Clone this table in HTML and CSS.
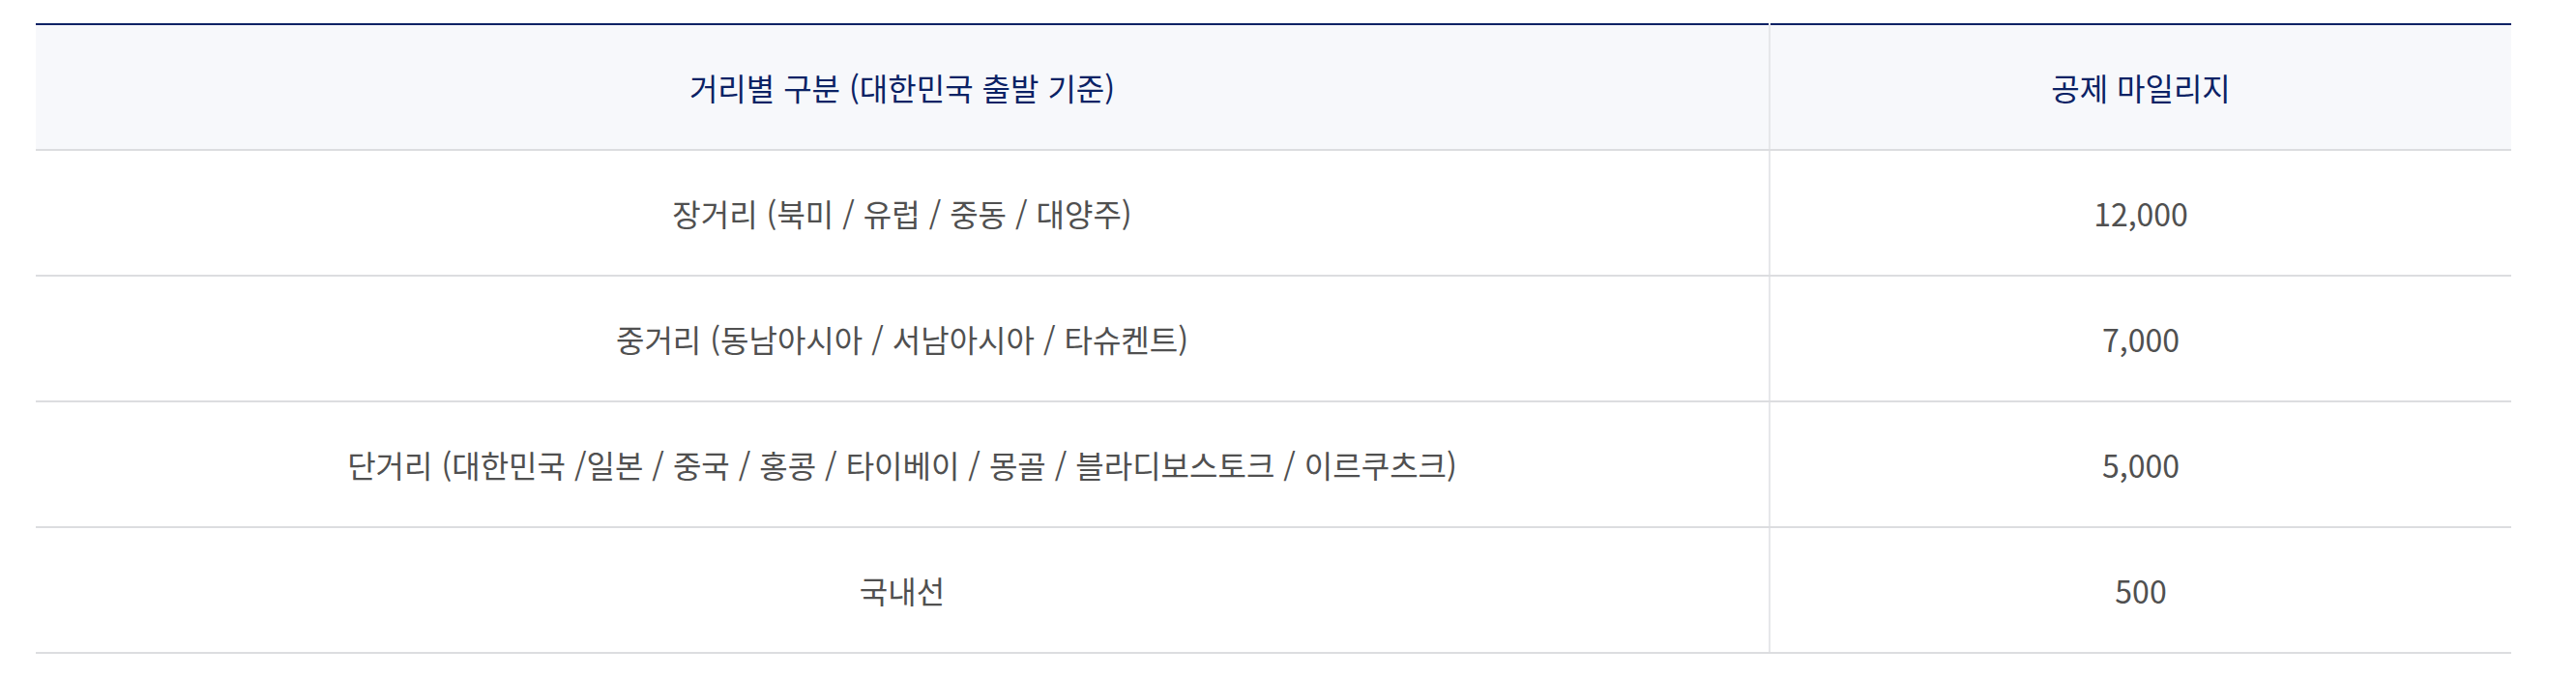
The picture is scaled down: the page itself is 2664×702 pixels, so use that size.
FILE: index.html
```html
<!DOCTYPE html>
<html lang="ko">
<head>
<meta charset="utf-8">
<title>공제 마일리지</title>
<link rel="stylesheet" href="styles.css">
</head>
<body>
<div class="wrap">
  <table class="mile-table">
    <colgroup>
      <col class="col-a">
      <col class="col-b">
    </colgroup>
    <thead>
      <tr>
        <th>거리별 구분 (대한민국 출발 기준)</th>
        <th>공제 마일리지</th>
      </tr>
    </thead>
    <tbody>
      <tr>
        <td>장거리 (북미 / 유럽 / 중동 / 대양주)</td>
        <td>12,000</td>
      </tr>
      <tr>
        <td>중거리 (동남아시아 / 서남아시아 / 타슈켄트)</td>
        <td>7,000</td>
      </tr>
      <tr>
        <td>단거리 (대한민국 /일본 / 중국 / 홍콩 / 타이베이 / 몽골 / 블라디보스토크 / 이르쿠츠크)</td>
        <td>5,000</td>
      </tr>
      <tr>
        <td>국내선</td>
        <td>500</td>
      </tr>
    </tbody>
  </table>
</div>
</body>
</html>
```
FILE: styles.css
```css
html, body {
  margin: 0;
  padding: 0;
  background: #ffffff;
}
.wrap {
  padding: 24px 0 0 37px;
}
.mile-table {
  width: 2560px;
  border-collapse: collapse;
  table-layout: fixed;
  border-top: 2px solid #0b2265;
  font-family: "Noto Sans CJK KR", "Noto Sans", sans-serif;
  font-size: 32px;
  line-height: 44px;
}
.col-a { width: 1793px; }
.col-b { width: 767px; }
.mile-table th,
.mile-table td {
  height: 130px;
  padding: 0 20px;
  text-align: center;
  vertical-align: middle;
  border-bottom: 2px solid #dcdde0;
  box-sizing: border-box;
}
.mile-table th:first-child,
.mile-table td:first-child {
  border-right: 2px solid #e6e7ea;
}
.mile-table th {
  background: #f7f8fb;
  color: #0b2265;
  font-weight: 400;
}
.mile-table td {
  color: #505050;
  font-weight: 400;
}
```
